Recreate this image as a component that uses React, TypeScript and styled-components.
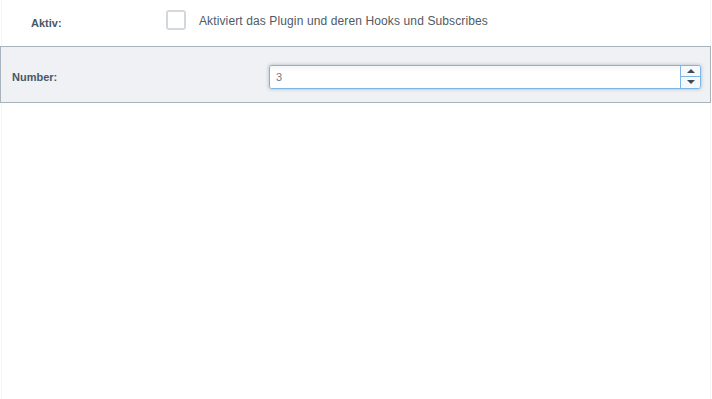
import React from "react";
import styled, { createGlobalStyle } from "styled-components";

const Global = createGlobalStyle`
  html, body { margin: 0; padding: 0; background: #fff; }
  body { font-family: "Liberation Sans", Arial, sans-serif; }
`;

const Page = styled.div`
  width: 712px;
  height: 399px;
  box-sizing: border-box;
  padding: 0 1px;
`;

const Frame = styled.div`
  height: 399px;
  box-sizing: border-box;
  border-left: 1px solid #f3f4f5;
  border-right: 1px solid #f3f4f5;
`;

const Row = styled.div<{ $alt?: boolean }>`
  display: flex;
  align-items: center;
  box-sizing: border-box;
  height: ${(p) => (p.$alt ? "57px" : "46px")};
  padding-top: ${(p) => (p.$alt ? "4px" : "0")};
  background: ${(p) => (p.$alt ? "#eff1f4" : "#fff")};
  border: ${(p) => (p.$alt ? "1px solid #a7b3bd" : "none")};
  margin: ${(p) => (p.$alt ? "0 0 0 -2px" : "0")};
  width: ${(p) => (p.$alt ? "711px" : "auto")};
`;

const Label = styled.div<{ $w: number; $pl: number }>`
  width: ${(p) => p.$w}px;
  padding-left: ${(p) => p.$pl}px;
  box-sizing: border-box;
  font-size: 11px;
  font-weight: bold;
  color: #475866;
  flex-shrink: 0;
`;

const Check = styled.span`
  width: 20px;
  height: 20px;
  box-sizing: border-box;
  border: 2px solid #d3d8dd;
  border-radius: 3px;
  background: #fff;
  margin-top: -6px;
  flex-shrink: 0;
`;

const CheckText = styled.span`
  font-size: 12px;
  letter-spacing: 0.12px;
  color: #4f5a64;
  margin-left: 13px;
  margin-top: -4px;
`;

const NumberBox = styled.div`
  display: flex;
  width: 432px;
  height: 24px;
  box-sizing: border-box;
  border: 1px solid #7cb6e6;
  border-radius: 3px;
  background: #fff;
  box-shadow: 0 0 3px 1px rgba(120, 140, 160, 0.35);
  overflow: hidden;
`;

const NumberInput = styled.input`
  flex: 1;
  border: none;
  outline: none;
  padding: 0 0 0 6px;
  font-family: "Liberation Sans", Arial, sans-serif;
  font-size: 11px;
  color: #6f7a84;
  background: linear-gradient(#f4f6f8, #fff 6px);
`;

const Spinner = styled.div`
  width: 19px;
  display: flex;
  flex-direction: column;
  border-left: 1px solid #7cb6e6;
`;

const SpinBtn = styled.div<{ $top?: boolean }>`
  flex: 1;
  display: flex;
  align-items: center;
  justify-content: center;
  background: #f7f8f9;
  border-bottom: ${(p) => (p.$top ? "1px solid #7cb6e6" : "none")};
`;

const Arrow = styled.span<{ $up?: boolean }>`
  width: 0;
  height: 0;
  border-left: 4px solid transparent;
  border-right: 4px solid transparent;
  ${(p) => (p.$up ? "border-bottom: 4px solid #3e4a55;" : "border-top: 4px solid #3e4a55;")}
`;

export default function App() {
  return (
    <>
      <Global />
      <Page>
        <Frame>
          <Row>
            <Label $w={164} $pl={29} style={{ marginTop: -1 }}>Aktiv:</Label>
            <Check />
            <CheckText>Aktiviert das Plugin und deren Hooks und Subscribes</CheckText>
          </Row>
          <Row $alt>
            <Label $w={268} $pl={11}>Number:</Label>
            <NumberBox>
              <NumberInput defaultValue="3" />
              <Spinner>
                <SpinBtn $top>
                  <Arrow $up />
                </SpinBtn>
                <SpinBtn>
                  <Arrow />
                </SpinBtn>
              </Spinner>
            </NumberBox>
          </Row>
        </Frame>
      </Page>
    </>
  );
}
